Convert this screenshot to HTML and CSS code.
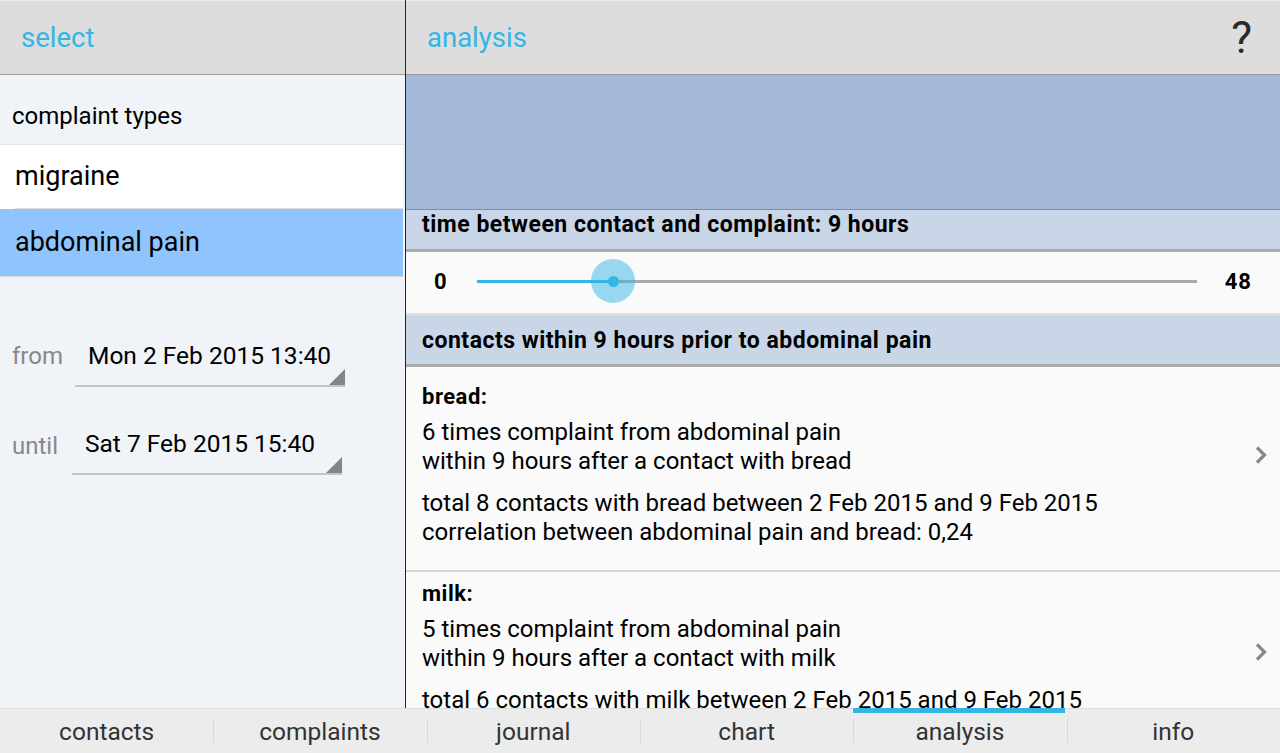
FILE: index.html
```html
<!DOCTYPE html>
<html>
<head>
<meta charset="utf-8">
<link rel="stylesheet" href="styles.css">
</head>
<body>
<div class="app">
  <div class="main">
    <section class="left">
      <header class="bar"><span class="bar-title">select</span></header>
      <div class="left-body">
        <div class="section-label">complaint types</div>
        <ul class="types">
          <li class="type">migraine</li>
          <li class="type selected">abdominal pain</li>
        </ul>
        <div class="range">
          <div class="range-row">
            <span class="range-label">from</span>
            <span class="picker">Mon 2 Feb 2015 13:40</span>
          </div>
          <div class="range-row until">
            <span class="range-label">until</span>
            <span class="picker">Sat 7 Feb 2015 15:40</span>
          </div>
        </div>
      </div>
    </section>
    <section class="right">
      <header class="bar"><span class="bar-title">analysis</span><span class="help">?</span></header>
      <div class="right-body">
        <div class="chart-area"></div>
        <div class="group-head">time between contact and complaint: 9 hours</div>
        <div class="slider-row">
          <span class="slider-val">0</span>
          <div class="slider">
            <div class="track"></div>
            <div class="fill" style="width:18.95%"></div>
            <div class="thumb" style="left:18.95%"><div class="thumb-dot"></div></div>
          </div>
          <span class="slider-val">48</span>
        </div>
        <div class="group-head second">contacts within 9 hours prior to abdominal pain</div>
        <div class="item first">
          <div class="item-text">
            <div class="item-name">bread:</div>
            <p class="item-p">6 times complaint from abdominal pain<br>within 9 hours after a contact with bread</p>
            <p class="item-p">total 8 contacts with bread between 2 Feb 2015 and 9 Feb 2015<br>correlation between abdominal pain and bread: 0,24</p>
          </div>
          <svg class="chev" width="14" height="20" viewBox="0 0 14 20"><path d="M3 2.5 L10.5 10 L3 17.5" fill="none" stroke="#888" stroke-width="3.2"/></svg>
        </div>
        <div class="item">
          <div class="item-text">
            <div class="item-name">milk:</div>
            <p class="item-p">5 times complaint from abdominal pain<br>within 9 hours after a contact with milk</p>
            <p class="item-p">total 6 contacts with milk between 2 Feb 2015 and 9 Feb 2015<br>correlation between abdominal pain and milk: 0,19</p>
          </div>
          <svg class="chev" width="14" height="20" viewBox="0 0 14 20"><path d="M3 2.5 L10.5 10 L3 17.5" fill="none" stroke="#888" stroke-width="3.2"/></svg>
        </div>
      </div>
    </section>
  </div>
  <nav class="tabs">
    <div class="tab">contacts</div>
    <div class="tab">complaints</div>
    <div class="tab">journal</div>
    <div class="tab">chart</div>
    <div class="tab active">analysis</div>
    <div class="tab">info</div>
  </nav>
</div>
</body>
</html>
```

FILE: styles.css
```css
* { box-sizing: border-box; }
html, body { margin: 0; padding: 0; }
body {
  font-family: Roboto, "Noto Sans", sans-serif;
  color: #000;
  background: #f0f3f8;
}
.app {
  width: 1280px;
  height: 753px;
  display: flex;
  flex-direction: column;
  overflow: hidden;
}
.main {
  flex: 1;
  display: flex;
  min-height: 0;
}
.left {
  width: 406px;
  border-right: 1px solid #222;
  background: #f0f3f8;
  display: flex;
  flex-direction: column;
}
.right {
  flex: 1;
  display: flex;
  flex-direction: column;
  min-width: 0;
  background: #fafafa;
}
.bar {
  height: 75px;
  flex: none;
  background: #dddddd;
  border-top: 1px solid #eeeeee;
  border-bottom: 1px solid #9a9a9a;
  display: flex;
  align-items: center;
  padding-left: 21px;
  padding-right: 28px;
}
.bar-title {
  color: #33b5e5;
  font-size: 27.5px;
  font-weight: 400;
}
.help {
  margin-left: auto;
  font-size: 44px;
  line-height: 44px;
  color: #2a2a2a;
  font-weight: 400;
}
.left-body {
  flex: 1;
}
.section-label {
  font-size: 24px;
  line-height: 30px;
  padding: 26px 12px 0;
  height: 69px;
}
.types {
  list-style: none;
  margin: 0;
  padding: 0;
  margin-right: 2px;
  border-top: 1px solid #e2e2e2;
}
.type {
  height: 64px;
  font-size: 27px;
  padding-left: 15px;
  padding-bottom: 3px;
  display: flex;
  align-items: center;
  background: #fff;
  position: relative;
}
.type:first-child::after {
  content: "";
  position: absolute;
  left: 15px;
  right: 0;
  bottom: 0;
  height: 1px;
  background: #dcdcdc;
}
.type.selected {
  background: #90c4fc;
  height: 68px;
  padding-bottom: 1px;
  border-bottom: 1px solid #d6d6d6;
}
.range {
  padding-top: 64px;
  display: flex;
  flex-direction: column;
  gap: 42px;
}
.range-row {
  display: flex;
  align-items: flex-start;
  padding-left: 12px;
}
.range-label {
  color: #888;
  font-size: 24px;
  line-height: 30px;
  width: 63px;
}
.until .range-label {
  padding-top: 2px;
}
.picker {
  width: 270px;
  font-size: 24.5px;
  line-height: 30px;
  padding: 0 0 14px 13px;
  border-bottom: 2px solid #c4c4c4;
  position: relative;
}
.until .picker { margin-left: -3px; }
.picker::after {
  content: "";
  position: absolute;
  right: 0;
  bottom: 0;
  width: 0;
  height: 0;
  border-left: 16px solid transparent;
  border-bottom: 16px solid #858585;
}
.right-body {
  flex: 1;
  overflow: hidden;
}
.chart-area {
  height: 135px;
  background: #a3b8d8;
  border-bottom: 1px solid #6f8fbf;
}
.group-head {
  background: #c8d6e8;
  font-weight: 700;
  font-size: 23px;
  letter-spacing: 0.5px;
  line-height: 28px;
  padding: 1px 0 0 16px;
  height: 42px;
  border-bottom: 3px solid #aaa;
}
.group-head.second {
  height: 52px;
  padding-top: 12px;
  margin-bottom: 8px;
}
.slider-row {
  height: 63px;
  display: flex;
  align-items: center;
  padding: 0 28px 2px 28px;
  background: #fafafa;
  border-bottom: 2px solid #e2e2e2;
}
.slider-val {
  font-weight: 700;
  font-size: 22px;
  letter-spacing: 1px;
}
.slider {
  flex: 1;
  position: relative;
  height: 44px;
  margin: 0 28px 0 29px;
}
.track {
  position: absolute;
  left: 0;
  right: 0;
  top: 20px;
  height: 3px;
  background: #aaa;
}
.fill {
  position: absolute;
  left: 0;
  top: 20px;
  height: 3px;
  background: #33b5e5;
}
.thumb {
  position: absolute;
  top: -0.5px;
  width: 44px;
  height: 44px;
  margin-left: -22px;
  border-radius: 50%;
  background: rgba(51, 181, 229, 0.5);
  display: flex;
  align-items: center;
  justify-content: center;
}
.thumb-dot {
  width: 11px;
  height: 11px;
  border-radius: 50%;
  background: #33b5e5;
}
.item {
  display: flex;
  align-items: flex-start;
  padding: 7px 12px 10px 16px;
  border-bottom: 2px solid #d4d4d4;
  background: #fafafa;
}
.item-text {
  flex: 1;
}
.item-name {
  font-weight: 700;
  font-size: 22px;
  letter-spacing: 0.5px;
  line-height: 30px;
  margin-bottom: 6px;
}
.item-p {
  margin: 0 0 13px;
  font-size: 24px;
  line-height: 29px;
}
.chev {
  flex: none;
  margin-top: 63px;
}
.tabs {
  height: 45px;
  flex: none;
  display: flex;
  background: #ececec;
  border-top: 1px solid #dcdcdc;
}
.tab {
  flex: 1;
  display: flex;
  align-items: center;
  justify-content: center;
  font-size: 24.5px;
  color: #333;
  position: relative;
}
.tab + .tab::before {
  content: "";
  position: absolute;
  left: 0;
  top: 10px;
  bottom: 10px;
  width: 1px;
  background: #d8d8d8;
}
.tab.active::after {
  content: "";
  position: absolute;
  left: 0;
  right: 2px;
  top: -1px;
  height: 5px;
  background: #33b5e5;
}
```
